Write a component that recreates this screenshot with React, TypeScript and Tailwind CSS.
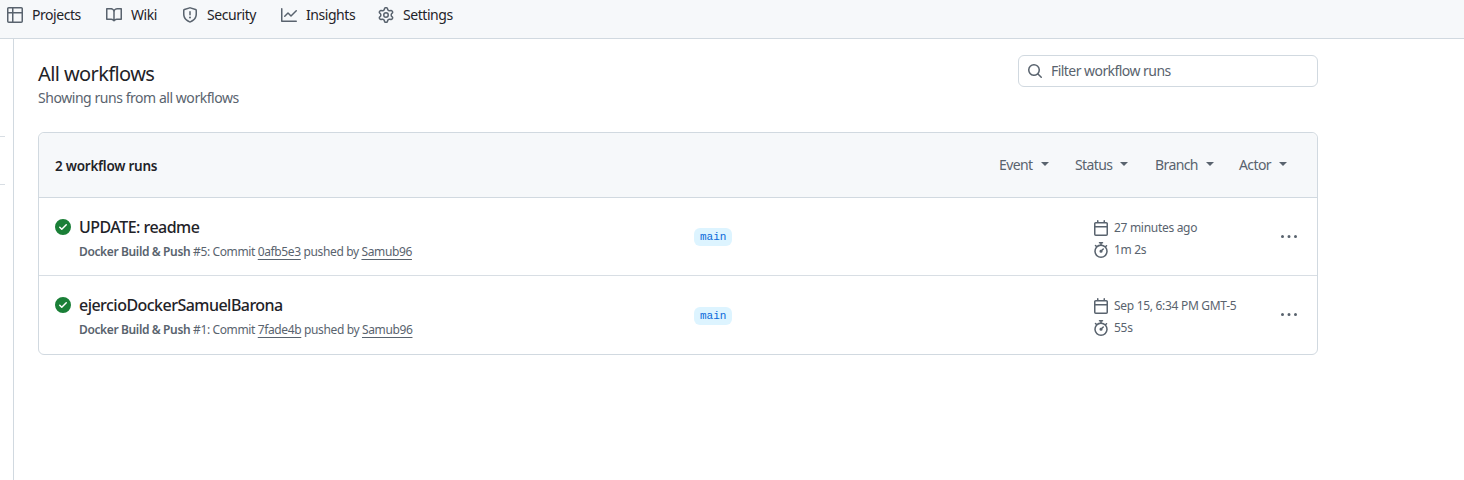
const paths = {
  table: "M0 1.75C0 .784.784 0 1.75 0h12.5C15.216 0 16 .784 16 1.75v12.5A1.75 1.75 0 0 1 14.25 16H1.75A1.75 1.75 0 0 1 0 14.25ZM6.5 6.5v8h7.75a.25.25 0 0 0 .25-.25V6.5Zm8-1.5V1.75a.25.25 0 0 0-.25-.25H6.5V5Zm-13 1.5v7.75c0 .138.112.25.25.25H5v-8ZM5 5V1.5H1.75a.25.25 0 0 0-.25.25V5Z",
  book: "M0 1.75A.75.75 0 0 1 .75 1h4.253c1.227 0 2.317.59 3 1.501A3.743 3.743 0 0 1 11.006 1h4.245a.75.75 0 0 1 .75.75v10.5a.75.75 0 0 1-.75.75h-4.507a2.25 2.25 0 0 0-1.591.659l-.622.621a.75.75 0 0 1-1.06 0l-.622-.621A2.25 2.25 0 0 0 5.258 13H.75a.75.75 0 0 1-.75-.75Zm7.251 10.324.004-5.073-.002-2.253A2.25 2.25 0 0 0 5.003 2.5H1.5v9h3.757a3.75 3.75 0 0 1 1.994.574ZM8.755 4.75l-.004 7.322a3.752 3.752 0 0 1 1.992-.572H14.5v-9h-3.495a2.25 2.25 0 0 0-2.25 2.25Z",
  shield: "M7.467.133a1.748 1.748 0 0 1 1.066 0l5.25 1.68A1.75 1.75 0 0 1 15 3.48V7c0 1.566-.32 3.182-1.303 4.682-.983 1.498-2.585 2.813-5.032 3.855a1.697 1.697 0 0 1-1.33 0c-2.447-1.042-4.049-2.357-5.032-3.855C1.32 10.182 1 8.566 1 7V3.48a1.75 1.75 0 0 1 1.217-1.667Zm.61 1.429a.25.25 0 0 0-.153 0l-5.25 1.68a.25.25 0 0 0-.174.238V7c0 1.358.275 2.666 1.057 3.86.784 1.194 2.121 2.34 4.366 3.297a.196.196 0 0 0 .154 0c2.245-.956 3.582-2.104 4.366-3.298C13.225 9.666 13.5 8.36 13.5 7V3.48a.251.251 0 0 0-.174-.237l-5.25-1.68ZM8.75 4.75v3a.75.75 0 0 1-1.5 0v-3a.75.75 0 0 1 1.5 0ZM9 10.5a1 1 0 1 1-2 0 1 1 0 0 1 2 0Z",
  graph: "M1.5 1.75V13.5h13.75a.75.75 0 0 1 0 1.5H.75a.75.75 0 0 1-.75-.75V1.75a.75.75 0 0 1 1.5 0Zm14.28 2.53-5.25 5.25a.75.75 0 0 1-1.06 0L7 7.06 4.28 9.78a.751.751 0 0 1-1.042-.018.751.751 0 0 1-.018-1.042l3.25-3.25a.75.75 0 0 1 1.06 0L10 7.94l4.72-4.72a.751.751 0 0 1 1.042.018.751.751 0 0 1 .018 1.042Z",
  gear: "M8 0a8.2 8.2 0 0 1 .701.031C9.444.095 9.99.645 10.16 1.29l.288 1.107c.018.066.079.158.212.224.231.114.454.243.668.386.123.082.233.09.299.071l1.103-.303c.644-.176 1.392.021 1.82.63.27.385.506.792.704 1.218.315.675.111 1.422-.364 1.891l-.814.806c-.049.048-.098.147-.088.294.016.257.016.515 0 .772-.01.147.038.246.088.294l.814.806c.475.469.679 1.216.364 1.891a7.977 7.977 0 0 1-.704 1.217c-.428.61-1.176.807-1.82.63l-1.102-.302c-.067-.019-.177-.011-.3.071a5.909 5.909 0 0 1-.668.386c-.133.066-.194.158-.211.224l-.29 1.106c-.168.646-.715 1.196-1.458 1.26a8.006 8.006 0 0 1-1.402 0c-.743-.064-1.289-.614-1.458-1.26l-.289-1.106c-.018-.066-.079-.158-.212-.224a5.738 5.738 0 0 1-.668-.386c-.123-.082-.233-.09-.299-.071l-1.103.303c-.644.176-1.392-.021-1.82-.63a8.12 8.12 0 0 1-.704-1.218c-.315-.675-.111-1.422.363-1.891l.815-.806c.05-.048.098-.147.088-.294a6.214 6.214 0 0 1 0-.772c.01-.147-.038-.246-.088-.294l-.815-.806C.635 6.045.431 5.298.746 4.623a7.92 7.92 0 0 1 .704-1.217c.428-.61 1.176-.807 1.82-.63l1.102.302c.067.019.177.011.3-.071.214-.143.437-.272.668-.386.133-.066.194-.158.211-.224l.29-1.106C6.009.645 6.556.095 7.299.03 7.53.01 7.764 0 8 0Zm-.571 1.525c-.036.003-.108.036-.137.146l-.289 1.105c-.147.561-.549.967-.998 1.189-.173.086-.34.183-.5.29-.417.278-.97.423-1.529.27l-1.103-.303c-.109-.03-.175.016-.195.045-.22.312-.412.644-.573.99-.014.031-.021.11.059.19l.815.806c.411.406.562.957.53 1.456a4.709 4.709 0 0 0 0 .582c.032.499-.119 1.05-.53 1.456l-.815.806c-.081.08-.073.159-.059.19.162.346.353.677.573.989.02.03.085.076.195.046l1.102-.303c.56-.153 1.113-.008 1.53.27.161.107.328.204.501.29.447.222.85.629.997 1.189l.289 1.105c.029.109.101.143.137.146a6.6 6.6 0 0 0 1.142 0c.036-.003.108-.036.137-.146l.289-1.105c.147-.561.549-.967.998-1.189.173-.086.34-.183.5-.29.417-.278.97-.423 1.529-.27l1.103.303c.109.029.175-.016.195-.045.22-.313.411-.644.573-.99.014-.031.021-.11-.059-.19l-.815-.806c-.411-.406-.562-.957-.53-1.456a4.709 4.709 0 0 0 0-.582c-.032-.499.119-1.05.53-1.456l.815-.806c.081-.08.073-.159.059-.19a6.464 6.464 0 0 0-.573-.989c-.02-.03-.085-.076-.195-.046l-1.102.303c-.56.153-1.113.008-1.53-.27a4.44 4.44 0 0 0-.501-.29c-.447-.222-.85-.629-.997-1.189l-.289-1.105c-.029-.11-.101-.143-.137-.146a6.6 6.6 0 0 0-1.142 0ZM11 8a3 3 0 1 1-6 0 3 3 0 0 1 6 0ZM9.5 8a1.5 1.5 0 1 0-3.001.001A1.5 1.5 0 0 0 9.5 8Z",
  search: "M10.68 11.74a6 6 0 0 1-7.922-8.982 6 6 0 0 1 8.982 7.922l3.04 3.04a.749.749 0 0 1-.326 1.275.749.749 0 0 1-.734-.215ZM11.5 7a4.499 4.499 0 1 0-8.997 0A4.499 4.499 0 0 0 11.5 7Z",
  check: "M8 16A8 8 0 1 1 8 0a8 8 0 0 1 0 16Zm3.78-9.72a.751.751 0 0 0-.018-1.042.751.751 0 0 0-1.042-.018L6.75 9.19 5.28 7.72a.751.751 0 0 0-1.042.018.751.751 0 0 0-.018 1.042l2 2a.75.75 0 0 0 1.06 0Z",
  calendar: "M4.75 0a.75.75 0 0 1 .75.75V2h5V.75a.75.75 0 0 1 1.5 0V2h1.25c.966 0 1.75.784 1.75 1.75v10.5A1.75 1.75 0 0 1 13.25 16H2.75A1.75 1.75 0 0 1 1 14.25V3.75C1 2.784 1.784 2 2.75 2H4V.75A.75.75 0 0 1 4.75 0ZM2.5 7.5v6.75c0 .138.112.25.25.25h10.5a.25.25 0 0 0 .25-.25V7.5Zm10.75-4H2.75a.25.25 0 0 0-.25.25V6h11V3.75a.25.25 0 0 0-.25-.25Z",
  stopwatch: "M5.75.75A.75.75 0 0 1 6.5 0h3a.75.75 0 0 1 0 1.5h-.75v1l-.001.041a6.724 6.724 0 0 1 3.464 1.435l.007-.006.75-.75a.749.749 0 0 1 1.275.326.749.749 0 0 1-.215.734l-.75.75-.006.007a6.75 6.75 0 1 1-10.548 0L2.72 4.78l-.75-.75a.751.751 0 0 1 .018-1.042.751.751 0 0 1 1.042-.018l.75.75.007.006A6.72 6.72 0 0 1 7.25 2.541V1.5H6.5a.75.75 0 0 1-.75-.75ZM8 14.5a5.25 5.25 0 1 0-.001-10.501A5.25 5.25 0 0 0 8 14.5Zm.389-6.7 1.33-1.33a.75.75 0 1 1 1.061 1.06L9.45 8.861A1.503 1.503 0 0 1 8 10.75a1.499 1.499 0 1 1 .389-2.95Z",
  kebab: "M8 9a1.5 1.5 0 1 0 0-3 1.5 1.5 0 0 0 0 3ZM1.5 9a1.5 1.5 0 1 0 0-3 1.5 1.5 0 0 0 0 3Zm13 0a1.5 1.5 0 1 0 0-3 1.5 1.5 0 0 0 0 3Z",
};

function Octicon({ d, className }: { d: string; className?: string }) {
  return (
    <svg viewBox="0 0 16 16" width="16" height="16" fill="currentColor" className={"shrink-0 " + (className ?? "")}>
      <path d={d} />
    </svg>
  );
}

const tabs = [
  { label: "Projects", icon: paths.table, width: "w-[99px]" },
  { label: "Wiki", icon: paths.book, width: "w-[76px]" },
  { label: "Security", icon: paths.shield, width: "w-[99px]" },
  { label: "Insights", icon: paths.graph, width: "w-[97px]" },
  { label: "Settings", icon: paths.gear, width: "w-[90px]" },
];

const filters = [
  { label: "Event", width: "w-[76px]" },
  { label: "Status", width: "w-[80px]" },
  { label: "Branch", width: "w-[84px]" },
  { label: "Actor", width: "w-[50px]" },
];

const runs = [
  { title: "UPDATE: readme", num: "#5", sha: "0afb5e3", when: "27 minutes ago", took: "1m 2s", height: "h-[77px]", titleTop: "mt-[4px]", badgeTop: "" },
  { title: "ejercioDockerSamuelBarona", num: "#1", sha: "7fade4b", when: "Sep 15, 6:34 PM GMT-5", took: "55s", height: "h-[79px] border-t border-[#d8dee4]", titleTop: "mt-[2px]", badgeTop: "mt-[1px]" },
];

export default function App() {
  return (
    <div className="h-[480px] w-[1464px] overflow-hidden bg-white font-['Noto_Sans',sans-serif] text-[14px] tracking-[-0.45px] text-[#1f2328]">
      <nav className="flex h-[39px] items-center border-b border-[#d1d9e0] bg-[#f6f8fa] pb-[8px] pl-[7px]">
        {tabs.map((t) => (
          <div key={t.label} className={"flex items-center gap-[9px] " + t.width}>
            <Octicon d={t.icon} className="text-[#59636e]" />
            <span className="pb-[2px]">{t.label}</span>
          </div>
        ))}
      </nav>

      <div className="flex h-[441px]">
        <aside className="relative w-[14px] shrink-0 border-r border-[#d1d9e0]">
          <div className="absolute left-0 top-[97px] h-px w-[5px] bg-[#d8dee4]" />
          <div className="absolute left-0 top-[145px] h-px w-[5px] bg-[#d8dee4]" />
        </aside>

        <main className="ml-[24px] w-[1280px]">
          <div className="flex h-[93px] justify-between pt-[16px]">
            <div className="pt-[6px]">
              <h1 className="text-[20px] leading-[26px] tracking-[-0.6px]">All workflows</h1>
              <p className="text-[#59636e]">Showing runs from all workflows</p>
            </div>
            <div className="flex h-[32px] w-[300px] items-center gap-[8px] rounded-md border border-[#d1d9e0] pb-[1px] pl-[8px] tracking-[-0.55px] text-[#59636e]">
              <Octicon d={paths.search} />
              <span>Filter workflow runs</span>
            </div>
          </div>

          <section className="rounded-md border border-[#d1d9e0]">
            <header className="flex h-[65px] items-center justify-between rounded-t-md border-b border-[#d1d9e0] bg-[#f6f8fa] pl-[16px] pr-[28px]">
              <span className="pt-[2px] text-[13.5px] font-semibold tracking-[-0.25px]">2 workflow runs</span>
              <div className="flex pb-[2px] tracking-[-0.6px]">
                {filters.map((f) => (
                  <div key={f.label} className={"flex items-center text-[#59636e] " + f.width}>
                    <span>{f.label}</span>
                    <span className="ml-[8px] h-0 w-0 border-x-[4px] border-t-[4px] border-x-transparent border-t-[#59636e]" />
                  </div>
                ))}
              </div>
            </header>

            {runs.map((r) => (
              <div key={r.sha} className={"flex items-center pl-[16px] " + r.height}>
                <div className={"flex w-[639px] gap-[8px] " + r.titleTop}>
                  <Octicon d={paths.check} className="mt-[3px] text-[#1a7f37]" />
                  <div>
                    <div className="text-[16px] font-medium leading-[22px] tracking-[-0.53px]">{r.title}</div>
                    <div className="mt-[5px] text-[12px] leading-[18px] tracking-[-0.37px] text-[#59636e]">
                      <span className="font-semibold">Docker Build &amp; Push</span> {r.num}: Commit{" "}
                      <span className="underline underline-offset-[3px]">{r.sha}</span> pushed by{" "}
                      <span className="underline underline-offset-[3px]">Samub96</span>
                    </div>
                  </div>
                </div>
                <div className={"flex w-[399px] " + r.badgeTop}>
                  <span className="h-[18px] rounded-md bg-[#ddf4ff] px-[6px] font-['Liberation_Mono',monospace] text-[11px] leading-[18px] tracking-normal text-[#0969da]">main</span>
                </div>
                <div className="mt-[4px] w-[188px] text-[12px] tracking-[-0.3px] text-[#59636e]">
                  <div className="flex h-[22px] items-center gap-[5px]">
                    <Octicon d={paths.calendar} />
                    <span>{r.when}</span>
                  </div>
                  <div className="flex h-[22px] items-center gap-[5px]">
                    <Octicon d={paths.stopwatch} />
                    <span>{r.took}</span>
                  </div>
                </div>
                <Octicon d={paths.kebab} className="text-[#59636e]" />
              </div>
            ))}
          </section>
        </main>
      </div>
    </div>
  );
}
